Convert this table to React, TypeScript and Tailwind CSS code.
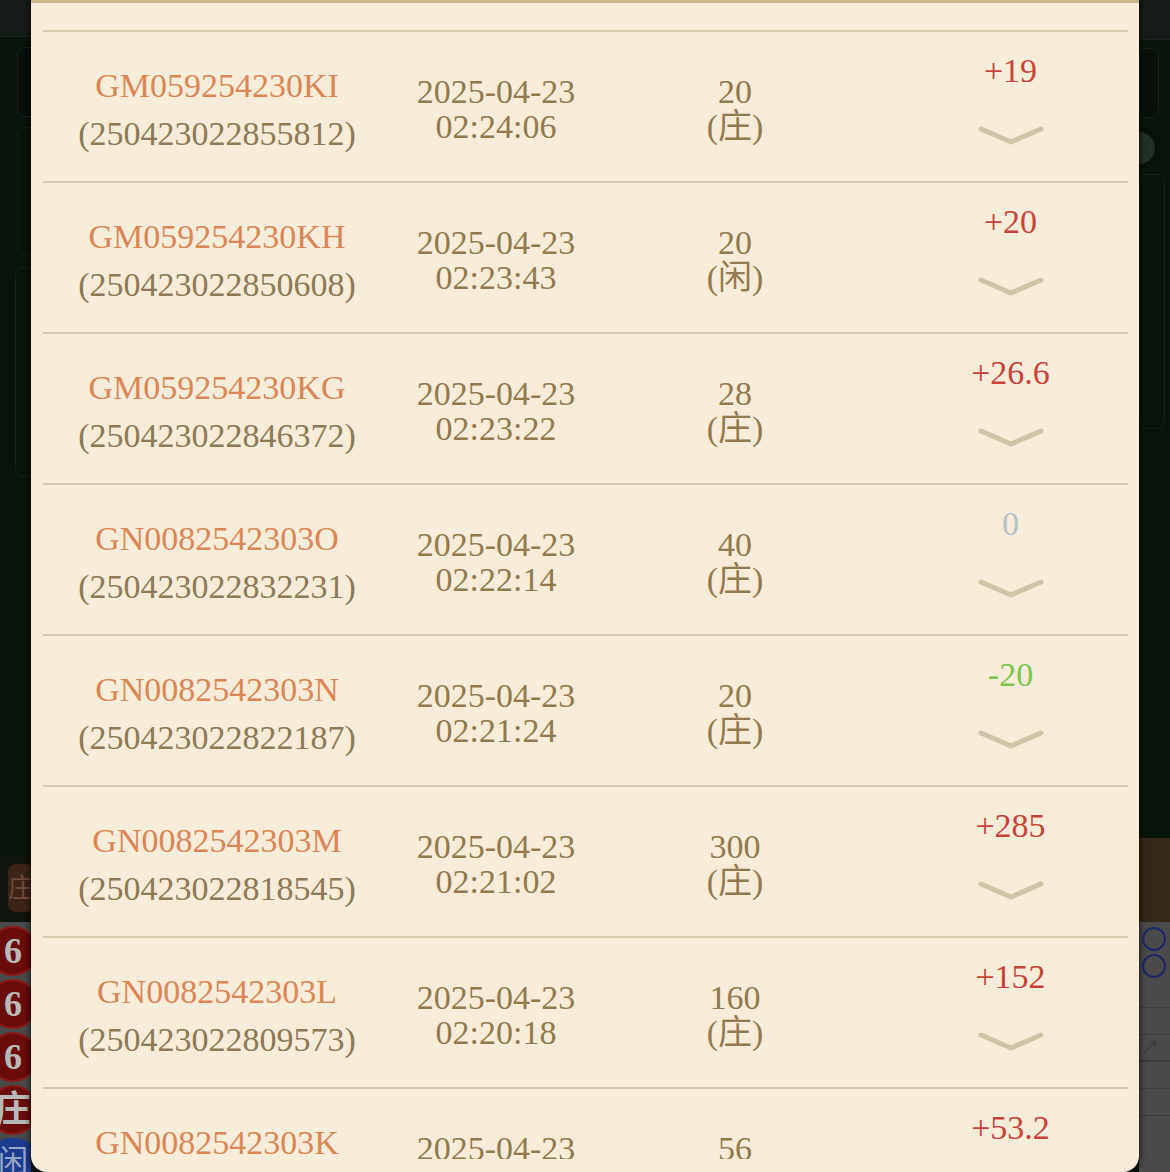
import React from "react";

type Row = {
  id: string;
  no: string;
  date: string;
  time: string;
  bet: string;
  side: string;
  amount: string;
  kind: "win" | "zero" | "lose";
};

const rows: Row[] = [
  { id: "GM059254230KI", no: "(250423022855812)", date: "2025-04-23", time: "02:24:06", bet: "20", side: "(庄)", amount: "+19", kind: "win" },
  { id: "GM059254230KH", no: "(250423022850608)", date: "2025-04-23", time: "02:23:43", bet: "20", side: "(闲)", amount: "+20", kind: "win" },
  { id: "GM059254230KG", no: "(250423022846372)", date: "2025-04-23", time: "02:23:22", bet: "28", side: "(庄)", amount: "+26.6", kind: "win" },
  { id: "GN0082542303O", no: "(250423022832231)", date: "2025-04-23", time: "02:22:14", bet: "40", side: "(庄)", amount: "0", kind: "zero" },
  { id: "GN0082542303N", no: "(250423022822187)", date: "2025-04-23", time: "02:21:24", bet: "20", side: "(庄)", amount: "-20", kind: "lose" },
  { id: "GN0082542303M", no: "(250423022818545)", date: "2025-04-23", time: "02:21:02", bet: "300", side: "(庄)", amount: "+285", kind: "win" },
  { id: "GN0082542303L", no: "(250423022809573)", date: "2025-04-23", time: "02:20:18", bet: "160", side: "(庄)", amount: "+152", kind: "win" },
  { id: "GN0082542303K", no: "(250423022758106)", date: "2025-04-23", time: "02:19:41", bet: "56", side: "(庄)", amount: "+53.2", kind: "win" },
];

const amountColor: Record<Row["kind"], string> = {
  win: "text-[#c9433b]",
  zero: "text-[#b4c0cc]",
  lose: "text-[#7cc44c]",
};

function Chevron() {
  return (
    <svg width="70" height="23" viewBox="0 0 70 23" className="block">
      <polyline
        points="5,5 35,18 65,5"
        fill="none"
        stroke="#cfc3a8"
        strokeWidth="5"
        strokeLinecap="round"
        strokeLinejoin="round"
      />
    </svg>
  );
}

function RecordRow({ r }: { r: Row }) {
  return (
    <div className="grid h-[151px] shrink-0 grid-cols-[348px_210px_268px_1fr] border-t-2 border-[#d6c9ad]">
      <div className="flex flex-col items-center pt-[30px] text-[34px] leading-[48px]">
        <div className="text-[#dc8656]">{r.id}</div>
        <div className="text-[#8c7a58]">{r.no}</div>
      </div>
      <div className="flex flex-col items-center pt-[42px] text-[34px] leading-[35px] text-[#917a50]">
        <div>{r.date}</div>
        <div>{r.time}</div>
      </div>
      <div className="flex flex-col items-center pt-[42px] text-[34px] leading-[35px] text-[#917a50]">
        <div>{r.bet}</div>
        <div>{r.side}</div>
      </div>
      <div className="flex flex-col items-center pl-[24px] pt-[22px]">
        <div className={`text-[34px] leading-[34px] ${amountColor[r.kind]}`}>{r.amount}</div>
        <div className="mt-[36px]">
          <Chevron />
        </div>
      </div>
    </div>
  );
}

function RedBall({ t }: { t: string }) {
  return (
    <div className="flex h-[50px] w-[50px] shrink-0 items-center justify-center rounded-full border-2 border-[#8a1a1a] bg-[#6a0c0c] text-[36px] font-bold leading-none text-[#b9b9b9]">
      {t}
    </div>
  );
}

function LeftStrip() {
  return (
    <div className="relative flex w-[31px] shrink-0 flex-col overflow-hidden bg-[#081409]">
      <div className="h-[37px] shrink-0 border-b border-[#1b241d] bg-[#141a16]" />
      <div className="ml-[17px] mt-[10px] h-[70px] w-[40px] shrink-0 rounded-[8px] border border-[#16221a] bg-[#070f08]" />
      <div className="ml-[17px] mt-[10px] h-[128px] w-[40px] shrink-0 rounded-[8px] border border-[#142016]" />
      <div className="ml-[15px] mt-[12px] h-[210px] w-[40px] shrink-0 rounded-[8px] border border-[#15211a]" />
      <div className="flex-1" />
      <div className="flex h-[68px] shrink-0 items-center bg-[#0e130b] pl-[8px]">
        <div className="flex h-[48px] w-[40px] items-center justify-center rounded-[8px] bg-[#3a2418] text-[26px] text-[#6c4a38]">
          庄
        </div>
      </div>
      <div className="flex h-[250px] shrink-0 flex-col gap-[3px] bg-[#4a4a4a] pl-[0px] pt-[4px]">
        <div className="-ml-[12px]"><RedBall t="6" /></div>
        <div className="-ml-[12px]"><RedBall t="6" /></div>
        <div className="-ml-[12px]"><RedBall t="6" /></div>
        <div className="-ml-[12px]"><RedBall t="庄" /></div>
        <div className="-ml-[12px] flex h-[50px] w-[50px] items-center justify-center rounded-full bg-[#1d3b8f] text-[30px] text-[#9aa6c8]">闲</div>
      </div>
    </div>
  );
}

function RightStrip() {
  return (
    <div className="relative flex w-[31px] shrink-0 flex-col overflow-hidden bg-[#081409]">
      <div className="h-[40px] shrink-0 border-b border-[#1b241d] bg-[#151b17]" />
      <div className="mt-[8px] h-[70px] w-[20px] shrink-0 rounded-[8px] border border-[#16221a] bg-[#070f08]" />
      <div className="mt-[14px] h-[32px] w-[16px] shrink-0 rounded-r-full bg-[#223026]" />
      <div className="mt-[10px] h-[255px] w-[26px] shrink-0 rounded-[8px] border border-[#15211a]" />
      <div className="flex-1" />
      <div className="h-[84px] shrink-0 bg-[#35281a]" />
      <div className="flex h-[250px] shrink-0 flex-col bg-[#4b4b4b]">
        <div className="ml-[3px] mt-[5px] h-[24px] w-[24px] rounded-full border-2 border-[#1b2a66]" />
        <div className="ml-[3px] mt-[3px] h-[24px] w-[24px] rounded-full border-2 border-[#1b2a66]" />
        <div className="mt-[4px] h-[26px] border-b border-[#3e3e3e]" />
        <div className="h-[27px] border-b border-[#3e3e3e]" />
        <div className="h-[27px] border-b-2 border-[#3a3a3a] pl-[2px] text-[18px] leading-[27px] text-[#3a3a3a]">↗</div>
        <div className="h-[27px] border-b border-[#3e3e3e]" />
        <div className="h-[27px] border-b border-[#3e3e3e]" />
      </div>
    </div>
  );
}

export default function App() {
  return (
    <div
      className="flex h-[1172px] w-[1170px] overflow-hidden bg-[#081409]"
      style={{ fontFamily: '"Liberation Serif", "Noto Sans CJK SC", serif' }}
    >
      <LeftStrip />
      <div className="relative z-10 flex h-[1172px] w-[1108px] shrink-0 flex-col overflow-hidden rounded-b-[16px] border-t-[3px] border-[#cbb690] bg-[#f7ecd9] pb-[13px] pl-[12px] pr-[11px] shadow-[0_0_5px_2px_rgba(0,0,0,0.55)]">
        <div className="flex min-h-0 flex-1 flex-col overflow-hidden">
          <div className="h-[27px] shrink-0" />
          {rows.map((r) => (
            <RecordRow key={r.id} r={r} />
          ))}
        </div>
      </div>
      <RightStrip />
    </div>
  );
}
